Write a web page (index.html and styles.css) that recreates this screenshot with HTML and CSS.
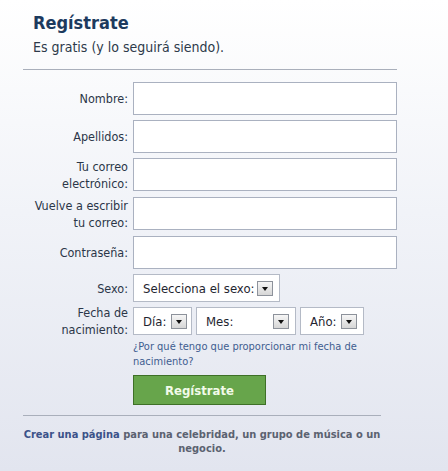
FILE: index.html
```html
<!DOCTYPE html>
<html lang="es">
<head>
<meta charset="utf-8">
<link rel="stylesheet" href="styles.css">
</head>
<body>
<div class="page">
  <div class="head">
    <h1 class="title">Regístrate</h1>
    <p class="subtitle">Es gratis (y lo seguirá siendo).</p>
  </div>
  <div class="rule"></div>
  <form class="form">
    <label class="lbl">Nombre:</label>
    <div class="field"><input class="txt" type="text"></div>

    <label class="lbl">Apellidos:</label>
    <div class="field"><input class="txt" type="text"></div>

    <label class="lbl">Tu correo electrónico:</label>
    <div class="field"><input class="txt" type="text"></div>

    <label class="lbl">Vuelve a escribir tu correo:</label>
    <div class="field"><input class="txt" type="text"></div>

    <label class="lbl">Contraseña:</label>
    <div class="field"><input class="txt" type="password"></div>

    <label class="lbl">Sexo:</label>
    <div class="field">
      <div class="sel sel-sex"><span class="sel-text">Selecciona el sexo:</span><span class="arrow"></span></div>
    </div>

    <div class="lbl-col">
      <label class="lbl lbl-date">Fecha de nacimiento:</label>
    </div>
    <div class="field">
      <div class="sel-row">
        <div class="sel sel-day"><span class="sel-text">Día:</span><span class="arrow"></span></div>
        <div class="sel sel-month"><span class="sel-text">Mes:</span><span class="arrow"></span></div>
        <div class="sel sel-year"><span class="sel-text">Año:</span><span class="arrow"></span></div>
      </div>
      <a class="why" href="#">¿Por qué tengo que proporcionar mi fecha de nacimiento?</a>
    </div>

    <div></div>
    <div class="field"><button class="btn" type="button">Regístrate</button></div>
  </form>
  <div class="rule rule-short"></div>
  <p class="footer"><a class="footer-link" href="#">Crear una página</a> para una celebridad, un grupo de música o un negocio.</p>
</div>
</body>
</html>
```

FILE: styles.css
```css
html, body {
  margin: 0;
  padding: 0;
}
body {
  width: 448px;
  height: 471px;
  background: linear-gradient(to bottom, #ffffff 0%, #f1f3f8 45%, #e2e5ef 100%);
  font-family: "DejaVu Sans Condensed", "DejaVu Sans", sans-serif;
  font-stretch: condensed;
  color: #333;
  overflow: hidden;
}
.page {
  padding-top: 12px;
}
.head {
  padding-left: 33px;
}
.title {
  margin: 0;
  font-size: 18px;
  line-height: 22px;
  font-weight: bold;
  color: #1c3a5e;
}
.subtitle {
  margin: 3px 0 0 0;
  font-size: 14px;
  line-height: 20px;
  color: #2d3a4a;
}
.rule {
  margin: 12px 0 0 23px;
  width: 374px;
  height: 1px;
  background: #a9afbb;
}
.rule-short {
  width: 358px;
  margin-top: 10px;
}
.form {
  margin: 12px 0 0 23px;
  display: grid;
  grid-template-columns: 105px 264px;
  column-gap: 5px;
  row-gap: 5px;
}
.lbl {
  text-align: right;
  font-size: 12.5px;
  line-height: 17px;
  color: #2b3648;
  display: flex;
  align-items: center;
  justify-content: flex-end;
}
.lbl-col {
  display: flex;
  justify-content: flex-end;
}
.lbl-date {
  height: 34px;
  margin-top: -3px;
}
.field {
  display: flex;
  flex-direction: column;
}
.txt {
  box-sizing: border-box;
  width: 264px;
  height: 33px;
  margin: 0;
  border: 1px solid #aab1c0;
  background: #fff;
  padding: 0 4px;
}
.sel-row {
  display: flex;
  gap: 4px;
}
.sel {
  box-sizing: border-box;
  height: 28px;
  border: 1px solid #b4bac6;
  background: #fff;
  display: flex;
  align-items: center;
  justify-content: space-between;
  padding: 0 6px 0 9px;
  font-size: 13px;
  color: #1f2530;
}
.sel-sex { width: 147px; }
.sel-day { width: 59px; padding-right: 4px; }
.sel-month { width: 100px; }
.sel-year { width: 64px; }
.arrow {
  box-sizing: border-box;
  width: 16px;
  height: 15px;
  border: 1px solid #8d929b;
  background: linear-gradient(to bottom, #f6f6f6, #d6d6d6);
  position: relative;
}
.arrow::after {
  content: "";
  position: absolute;
  left: 3.5px;
  top: 5px;
  border-left: 3.5px solid transparent;
  border-right: 3.5px solid transparent;
  border-top: 4px solid #111;
}
.why {
  display: block;
  margin-top: 4px;
  font-size: 11px;
  line-height: 15px;
  color: #3f5d90;
  text-decoration: none;
}
.btn {
  margin-top: 1px;
  box-sizing: border-box;
  width: 133px;
  height: 30px;
  background: #67a54b;
  border: 1px solid #3e7027;
  color: #f2fbe9;
  font-family: inherit;
  font-stretch: condensed;
  font-weight: bold;
  font-size: 13px;
  padding: 0;
  cursor: pointer;
}
.footer {
  margin: 12px 0 0 23px;
  width: 358px;
  text-align: center;
  font-size: 11px;
  line-height: 13.5px;
  font-weight: bold;
  color: #5b6270;
}
.footer-link {
  color: #3b5289;
  text-decoration: none;
}
```
